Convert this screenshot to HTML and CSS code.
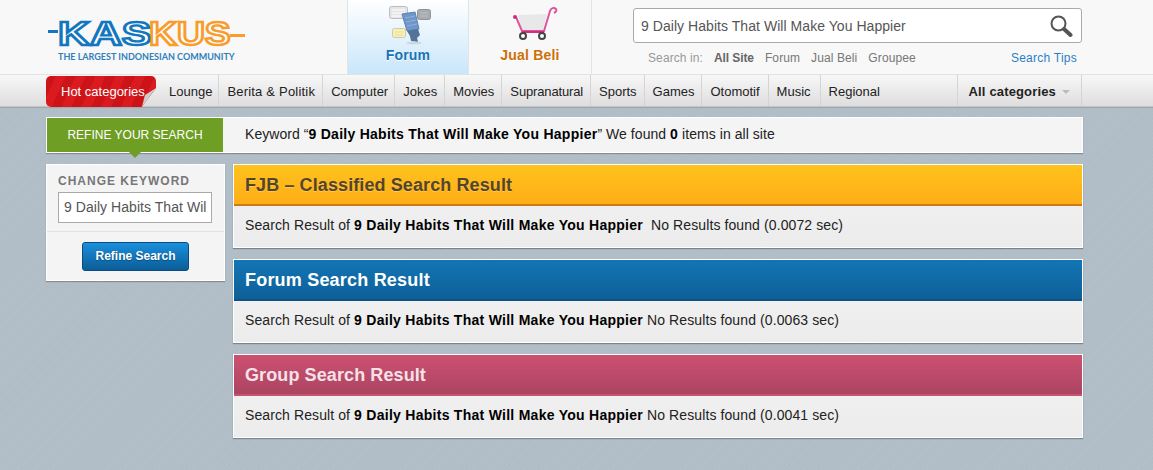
FILE: index.html
```html
<!DOCTYPE html>
<html lang="en">
  <head>
    <meta charset="UTF-8" />
    <title>Kaskus Search</title>
    <link rel="stylesheet" href="styles.css">
  </head>
  <body>
    <header class="top">
      <div class="logo">
        <div class="logo-mark">
          <span class="logo-dash dash-blue"></span><span class="logo-kas">KAS</span><span class="logo-kus">KUS</span><span class="logo-dash dash-orange"></span>
        </div>
        <div class="logo-tag">THE LARGEST INDONESIAN COMMUNITY</div>
      </div>

      <a class="tab tab-forum">
        <svg class="tab-icon" width="50" height="42" viewBox="0 0 50 42">
          <rect x="6.5" y="1.5" width="18" height="12" rx="2" fill="#e6e6e6" stroke="#bdbdbd" />
          <path d="M9 5h13M9 8h13M9 11h9" stroke="#fff" />
          <rect x="34.5" y="4.500" width="13" height="10" rx="2" fill="#a7abaf" stroke="#8f9498" />
          <path d="M37 8h8M37 11h8" stroke="#bcc0c3" />
          <rect x="9.500" y="23.500" width="13" height="9" rx="2" fill="#f8f0b6" stroke="#cfcba6" />
          <path d="M12 27h8M12 30h8" stroke="#e6de9e" />
          <path d="M19 9l13-2 4 17-12 2z" fill="#6f97c9" stroke="#5a82b5" />
          <path d="M22 13l10-2M23 17l10-2M24 21l10-2" stroke="#8fb1da" />
          <path d="M24 26l11-2 2 6-3 3 1 4-7-1-1-5z" fill="#54729a" />
          <ellipse cx="31" cy="38" rx="8" ry="1.500" fill="#ccd8e2" />
        </svg>
        <span>Forum</span>
      </a>
      <a class="tab tab-jual">
        <svg class="tab-icon" width="60" height="42" viewBox="0 0 60 42">
          <path d="M18 10l29-1-4 16H22z" fill="#e8e8e8" />
          <path d="M16 12l6 14h22L50 6c1-3 4-4 6-2 1 2 0 3-2 4" fill="none" stroke="#e0559a" stroke-width="2" />
          <path d="M22 27h22" stroke="#cf2f7e" stroke-width="2" />
          <circle cx="15" cy="12" r="2" fill="#cf2f7e" />
          <circle cx="23" cy="31" r="3" fill="#fff" stroke="#444" stroke-width="2" />
          <circle cx="42" cy="31" r="3" fill="#fff" stroke="#444" stroke-width="2" />
        </svg>
        <span>Jual Beli</span>
      </a>

      <div class="search">
        <div class="search-box">
          <span class="search-text">9 Daily Habits That Will Make You Happier</span>
          <svg width="24" height="24" viewBox="0 0 24 24">
            <circle cx="9.500" cy="9.500" r="7" fill="#fff" stroke="#555" stroke-width="2" />
            <path d="M15 15l6.500 6" stroke="#555" stroke-width="4" stroke-linecap="round" />
          </svg>
        </div>
        <div class="search-opts">
          <span class="opt-label">Search in:</span>
          <b class="opt-active">All Site</b>
          <span>Forum</span>
          <span>Jual Beli</span>
          <span>Groupee</span>
          <a class="tips">Search Tips</a>
        </div>
      </div>
    </header>

    <nav class="nav">
      <div class="nav-inner">
        <a class="hot">Hot categories</a>
        <a class="nav-item nav-first">Lounge</a>
        <a class="nav-item nav-wide">Berita &amp; Politik</a>
        <a class="nav-item nav-computer">Computer</a>
        <a class="nav-item">Jokes</a>
        <a class="nav-item">Movies</a>
        <a class="nav-item nav-tight">Supranatural</a>
        <a class="nav-item">Sports</a>
        <a class="nav-item">Games</a>
        <a class="nav-item nav-otomotif">Otomotif</a>
        <a class="nav-item nav-music">Music</a>
        <a class="nav-item nav-last">Regional</a>
        <a class="nav-all">All categories <i class="caret"></i></a>
      </div>
    </nav>

    <main class="wrap">
      <div class="refine-bar">
        <div class="refine-tag">REFINE YOUR SEARCH</div>
        <div class="refine-msg">Keyword “<b>9 Daily Habits That Will Make You Happier</b>” We found <b>0</b> items in all site</div>
      </div>

      <div class="columns">
        <aside class="side">
          <div class="side-top">
            <div class="side-label">CHANGE KEYWORD</div>
            <div class="side-input">9 Daily Habits That Wil</div>
          </div>
          <div class="side-bottom">
            <button class="refine-btn">Refine Search</button>
          </div>
        </aside>

        <section class="results">
          <div class="result">
            <h2 class="result-head head-fjb">FJB – Classified Search Result</h2>
            <p class="result-body">Search Result of <b>9 Daily Habits That Will Make You Happier</b>&nbsp; No Results found (0.0072 sec)</p>
          </div>
          <div class="result">
            <h2 class="result-head head-forum">Forum Search Result</h2>
            <p class="result-body">Search Result of <b>9 Daily Habits That Will Make You Happier</b> No Results found (0.0063 sec)</p>
          </div>
          <div class="result">
            <h2 class="result-head head-group">Group Search Result</h2>
            <p class="result-body">Search Result of <b>9 Daily Habits That Will Make You Happier</b> No Results found (0.0041 sec)</p>
          </div>
        </section>
      </div>
    </main>
  </body>
</html>
```

FILE: styles.css
```css
* {
  box-sizing: border-box;
}
html, body {
  height: 100%;
}
body {
  margin: 0;
  font-family: "Liberation Sans", Arial, sans-serif;
  font-size: 14px;
  color: #222;
  background-color: #b2bfc8;
  background-image: repeating-linear-gradient(135deg, #b3c0c9 0, #b3c0c9 1px, #b0bdc6 1px, #b0bdc6 3px);
  overflow: hidden;
}

/* header */
.top {
  height: 75px;
  display: flex;
  background: #f8f8f8;
  border-bottom: 1px solid #e2e2e2;
}
.logo {
  width: 347px;
  padding: 20px 0 0 48px;
}
.logo-mark {
  display: flex;
  align-items: center;
  height: 28px;
  width: 197px;
}
.logo-kas, .logo-kus {
  flex: none;
  font-size: 32.5px;
  font-weight: bold;
  line-height: 28px;
  color: #fff;
  transform-origin: left center;
  -webkit-text-stroke: 2.4px #1277bf;
}
.logo-kas {
  width: 91px;
  transform: scaleX(1.36);
}
.logo-kus {
  width: 81px;
  transform: scaleX(1.19);
  -webkit-text-stroke-color: #f89c2c;
}
.logo-dash {
  height: 3px;
  flex: none;
}
.dash-blue {
  width: 10px;
  margin-top: -5px;
  background: #1277bf;
}
.dash-orange {
  width: 15px;
  margin-top: 3px;
  background: #f89c2c;
}
.logo-tag {
  margin: 3px 0 0 10px;
  font-family: Lato, "Liberation Sans", sans-serif;
  font-size: 9px;
  font-weight: bold;
  line-height: 12px;
  color: #2f7fbd;
  white-space: nowrap;
}
.tab {
  width: 122px;
  height: 74px;
  display: flex;
  flex-direction: column;
  align-items: center;
  padding-top: 5px;
  font-weight: bold;
  border-right: 1px solid #e4e4e4;
}
.tab-icon {
  display: block;
  flex: none;
}
.tab span {
  margin-top: -1px;
  font-size: 14px;
  line-height: 18px;
  letter-spacing: 0.2px;
  text-shadow: 0 1px 0 #fff;
}
.tab-forum {
  border-left: 1px solid #e4e4e4;
  background: linear-gradient(#fff, #c9e6fa);
  color: #1673b6;
}
.tab-jual {
  width: 123px;
  color: #cc7008;
}
.search {
  margin-left: 41px;
  width: 449px;
  padding-top: 8px;
}
.search-box {
  height: 35px;
  background: #fff;
  border: 1px solid #aaa;
  border-radius: 3px;
  display: flex;
  align-items: center;
  justify-content: space-between;
  padding: 0 8px 0 7px;
}
.search-text {
  font-size: 14px;
  letter-spacing: 0.05px;
  color: #555;
}
.search-opts {
  display: flex;
  margin-top: 8px;
  padding: 0 5px 0 15px;
  gap: 11px;
  font-size: 12px;
  line-height: 14px;
  letter-spacing: 0.1px;
  color: #777;
}
.opt-label {
  color: #999;
}
.opt-active {
  color: #666;
  letter-spacing: -0.1px;
}
.tips {
  margin-left: auto;
  letter-spacing: 0.25px;
  color: #2a7fc8;
}

/* category nav */
.nav {
  height: 32px;
  background: linear-gradient(#f7f7f7, #dedede);
  border-bottom: 1px solid #c4c4c4;
  box-shadow: 0 1px 1px rgba(0, 0, 0, 0.1);
}
.nav-inner {
  display: flex;
  margin-left: 46px;
  width: 1036px;
  height: 31px;
  font-size: 13px;
  line-height: 33px;
  color: #222;
}
.hot {
  flex: none;
  width: 110px;
  height: 31px;
  margin-top: 1px;
  padding-left: 15px;
  line-height: 31px;
  background: repeating-linear-gradient(115deg, #cc1317 0, #cc1317 9px, #da1a1e 9px, #da1a1e 18px);
  color: #fff;
  border-radius: 5px 5px 0 5px;
  clip-path: polygon(0 0, 100% 0, 100% 39%, 87% 100%, 0 100%);
  position: relative;
}
.hot::after {
  content: "";
  position: absolute;
  right: 0;
  bottom: 0;
  width: 14px;
  height: 19px;
  background: linear-gradient(135deg, #bdbdbd, #e4e4e4);
  clip-path: polygon(100% 0, 21% 37%, 0 100%);
}
.nav-item {
  flex: none;
  padding: 0 7px 0 8px;
  border-right: 1px solid #d4d4d4;
  white-space: nowrap;
}
.nav-first {
  padding-left: 13px;
  padding-right: 6px;
}
.nav-wide {
  letter-spacing: 0.2px;
}
.nav-computer {
  padding-right: 6px;
}
.nav-tight {
  letter-spacing: -0.15px;
}
.nav-otomotif {
  padding-right: 8px;
}
.nav-music {
  padding-right: 9px;
}
.nav-last {
  border-right: none;
  width: 136px;
}
.nav-all {
  flex: none;
  width: 125px;
  padding-left: 11px;
  font-weight: bold;
  letter-spacing: 0.15px;
  border-left: 1px solid #d4d4d4;
  border-right: 1px solid #d4d4d4;
  white-space: nowrap;
}
.caret {
  display: inline-block;
  margin-left: 2px;
  vertical-align: 2px;
  border-style: solid;
  border-width: 4px 4px 0;
  border-color: #bbb transparent transparent;
}

/* main */
.wrap {
  width: 1037px;
  margin: 10px 0 0 46px;
}
.refine-bar {
  height: 36px;
  display: flex;
  background: #f4f4f4;
  border: 1px solid #fff;
  box-shadow: 0 1px 1px rgba(0, 0, 0, 0.25);
}
.refine-tag {
  width: 176px;
  background: #6f9e25;
  color: #fff;
  font-size: 12px;
  line-height: 34px;
  text-align: center;
  position: relative;
}
.refine-tag::after {
  content: "";
  position: absolute;
  left: 82px;
  bottom: -6px;
  border-style: solid;
  border-width: 6px 6px 0;
  border-color: #6f9e25 transparent transparent;
}
.refine-msg {
  padding-left: 22px;
  font-size: 14px;
  line-height: 33px;
  letter-spacing: 0.05px;
  color: #222;
}
.refine-msg b {
  letter-spacing: 0.27px;
  color: #000;
}
.columns {
  display: flex;
  gap: 8px;
  margin-top: 11px;
  align-items: flex-start;
}
.side {
  width: 179px;
  background: #f4f4f4;
  border: 1px solid #fff;
  box-shadow: 0 1px 1px rgba(0, 0, 0, 0.25);
}
.side-top {
  padding: 9px 12px 8px 11px;
  border-bottom: 1px solid #e2e2e2;
}
.side-label {
  font-size: 12px;
  font-weight: bold;
  line-height: 14px;
  letter-spacing: 1px;
  color: #777;
  white-space: nowrap;
}
.side-input {
  margin-top: 4px;
  height: 31px;
  padding-left: 5px;
  background: #fff;
  border: 1px solid #aaa;
  font-size: 14px;
  line-height: 29px;
  letter-spacing: 0.05px;
  color: #555;
  overflow: hidden;
  white-space: nowrap;
}
.side-bottom {
  padding: 10px 0 9px;
  text-align: center;
}
.refine-btn {
  display: block;
  margin: 0 auto;
  width: 107px;
  height: 29px;
  padding: 0 0 2px;
  background: linear-gradient(#1a8fdc, #0b5d98);
  border: 1px solid #0a4a7c;
  border-radius: 3px;
  color: #fff;
  font-family: inherit;
  font-size: 12px;
  font-weight: bold;
  text-shadow: 0 1px 1px #0a4a7c;
}
.results {
  width: 850px;
  display: flex;
  flex-direction: column;
  gap: 11px;
}
.result {
  height: 84px;
  background: linear-gradient(#f3f3f3, #ececec);
  border: 1px solid #fff;
  box-shadow: 0 1px 1px rgba(0, 0, 0, 0.3);
}
.result-head {
  margin: 0;
  height: 41px;
  padding-left: 11px;
  font-size: 18px;
  line-height: 40px;
  letter-spacing: 0.2px;
  font-weight: bold;
  color: #fff;
}
.head-fjb {
  background: linear-gradient(#ffc21c, #feae18);
  border-bottom: 2px solid #cc7a14;
  color: #54452a;
  letter-spacing: 0.1px;
  text-shadow: 0 1px 0 rgba(255, 255, 255, 0.25);
}
.head-forum {
  background: linear-gradient(#1276b4, #0f5f98);
  border-bottom: 2px solid #0c5386;
}
.head-group {
  background: linear-gradient(#cd5070, #ab4562);
  border-bottom: 2px solid #c55470;
  color: #f5e2e8;
  letter-spacing: 0.1px;
}
.result-body {
  margin: 0;
  padding-left: 11px;
  font-size: 14px;
  line-height: 39px;
  letter-spacing: 0.1px;
  color: #222;
}
.result-body b {
  letter-spacing: 0.27px;
  color: #000;
}
```
